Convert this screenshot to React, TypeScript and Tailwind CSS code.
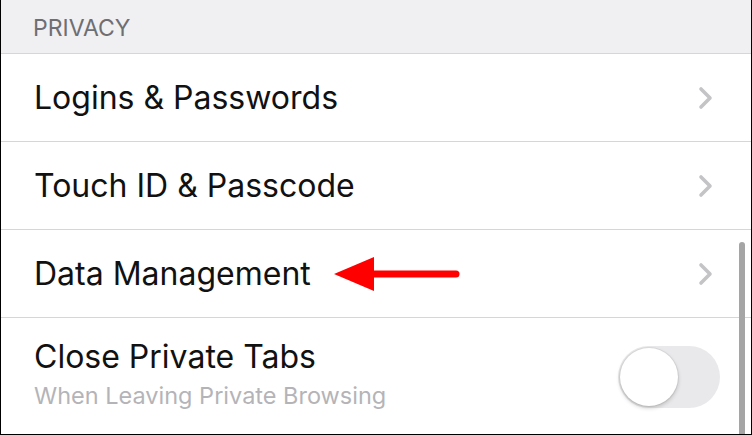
import React from "react";

const rows = ["Logins & Passwords", "Touch ID & Passcode", "Data Management"];

function Chevron() {
  return (
    <svg width="16" height="24" viewBox="0 0 16 24" className="shrink-0">
      <path
        d="M3 3 L12 12 L3 21"
        fill="none"
        stroke="#c4c4c7"
        strokeWidth="3.6"
        strokeLinecap="round"
        strokeLinejoin="round"
      />
    </svg>
  );
}

function RedArrow() {
  return (
    <svg width="128" height="40" viewBox="0 0 128 40" className="absolute left-[332px] top-1/2 -translate-y-1/2">
      <line x1="36" y1="20" x2="123" y2="20" stroke="#ff0000" strokeWidth="7" strokeLinecap="round" />
      <polygon points="1,20 41,3 41,37" fill="#ff0000" />
    </svg>
  );
}

export default function App() {
  return (
    <div
      className="relative w-[752px] h-[435px] overflow-hidden bg-white border-l border-r border-b border-black"
      style={{ fontFamily: "Inter, 'Noto Sans', sans-serif" }}
    >
      {/* Section header */}
      <div className="h-[54px] bg-[#f0f0f2] border-b border-[#d6d6d8] flex items-center pl-[32px] pt-[3px]">
        <span className="text-[23px] text-[#6e6e73]">PRIVACY</span>
      </div>

      {rows.map((label) => (
        <div
          key={label}
          className="relative h-[88px] border-b border-[#d6d6d8] flex items-center justify-between pl-[33px] pr-[37px]"
        >
          <span className="text-[32px] text-[#111]">{label}</span>
          <Chevron />
          {label === "Data Management" && <RedArrow />}
        </div>
      ))}

      {/* Toggle row */}
      <div className="h-[115px] flex items-center justify-between pl-[33px] pr-[31px] pb-[2px]">
        <div className="flex flex-col">
          <span className="text-[32px] text-[#111] leading-[38px]">Close Private Tabs</span>
          <span className="text-[23.5px] text-[#b4b4b8] leading-[30px] mt-[5px]">When Leaving Private Browsing</span>
        </div>
        <div className="relative w-[102px] h-[62px] mt-[4px] rounded-full bg-[#e9e9eb]">
          <div className="absolute left-[2px] top-[2px] w-[58px] h-[58px] rounded-full bg-white shadow-[0_2px_4px_rgba(0,0,0,0.2),0_0_0_1px_rgba(0,0,0,0.05)]" />
        </div>
      </div>

      {/* Scroll indicator */}
      <div className="absolute left-[738px] top-[242px] w-[6px] h-[200px] rounded-full bg-[#a5a5a5]" />
    </div>
  );
}
